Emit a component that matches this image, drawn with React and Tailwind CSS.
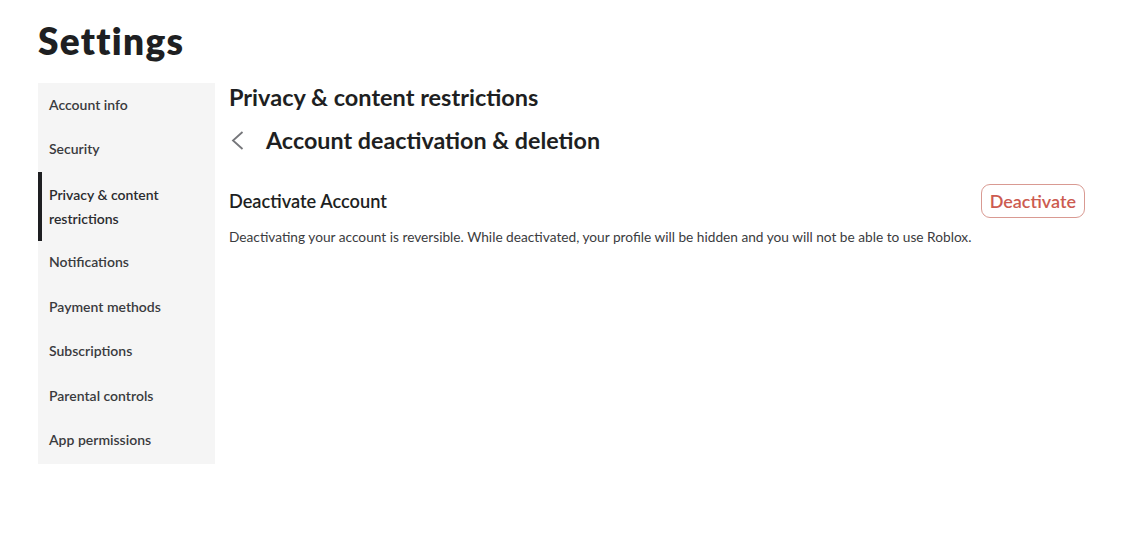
import React from "react";

const items = [
  "Account info",
  "Security",
  "Privacy & content restrictions",
  "Notifications",
  "Payment methods",
  "Subscriptions",
  "Parental controls",
  "App permissions",
];

export default function App() {
  return (
    <div
      className="w-[1127px] h-[538px] bg-white text-[#1c1c1c]"
      style={{ fontFamily: "Lato, 'Noto Sans', sans-serif" }}
    >
      <div className="pl-[38px] pt-[19px]">
        <h1 className="text-[37px] leading-[44px] font-extrabold text-[#1e1f22] tracking-[1.3px]">
          Settings
        </h1>
        <div className="flex mt-[20px]">
          <nav className="w-[177px] bg-[#f5f5f5] flex flex-col pb-[1px]">
            {items.map((it, i) => {
              const active = i === 2;
              return (
                <div
                  key={it}
                  className={
                    active
                      ? "border-l-4 border-[#1e1f22] pl-[7px] pr-[24px] pt-[10.5px] pb-[10px] text-[14px] leading-6 font-semibold text-[#2a2b2e]"
                      : "pl-[11px] pr-[24px] pt-[9.5px] pb-[11px] text-[14px] leading-6 font-semibold text-[#3a3b3e]"
                  }
                >
                  {it}
                </div>
              );
            })}
          </nav>
          <main className="flex-1 pl-[14px] pr-[42px]">
            <h2 className="text-[23.5px] leading-[28px] font-bold text-[#1e1f22]">
              Privacy &amp; content restrictions
            </h2>
            <div className="flex items-center mt-[15px] h-[28px]">
              <svg
                width="13"
                height="19"
                viewBox="0 0 13 19"
                className="ml-[2px]"
                fill="none"
                stroke="#75767a"
                strokeWidth="1.8"
              >
                <path d="M11.5 1 L2 9.5 L11.5 18" />
              </svg>
              <h3 className="ml-[22px] text-[23.3px] leading-[28px] font-bold text-[#1e1f22]">
                Account deactivation &amp; deletion
              </h3>
            </div>
            <div className="flex items-center justify-between mt-[30px]">
              <div className="text-[18.2px] leading-6 font-semibold text-[#1e1f22]">
                Deactivate Account
              </div>
              <button className="h-[34px] px-[8px] rounded-[9px] border border-[#d99a92] text-[#cc5b50] text-[18px] font-semibold leading-6">
                Deactivate
              </button>
            </div>
            <p className="mt-[9px] text-[13.7px] leading-5 text-[#3b3c40]">
              Deactivating your account is reversible. While deactivated, your
              profile will be hidden and you will not be able to use Roblox.
            </p>
          </main>
        </div>
      </div>
    </div>
  );
}
